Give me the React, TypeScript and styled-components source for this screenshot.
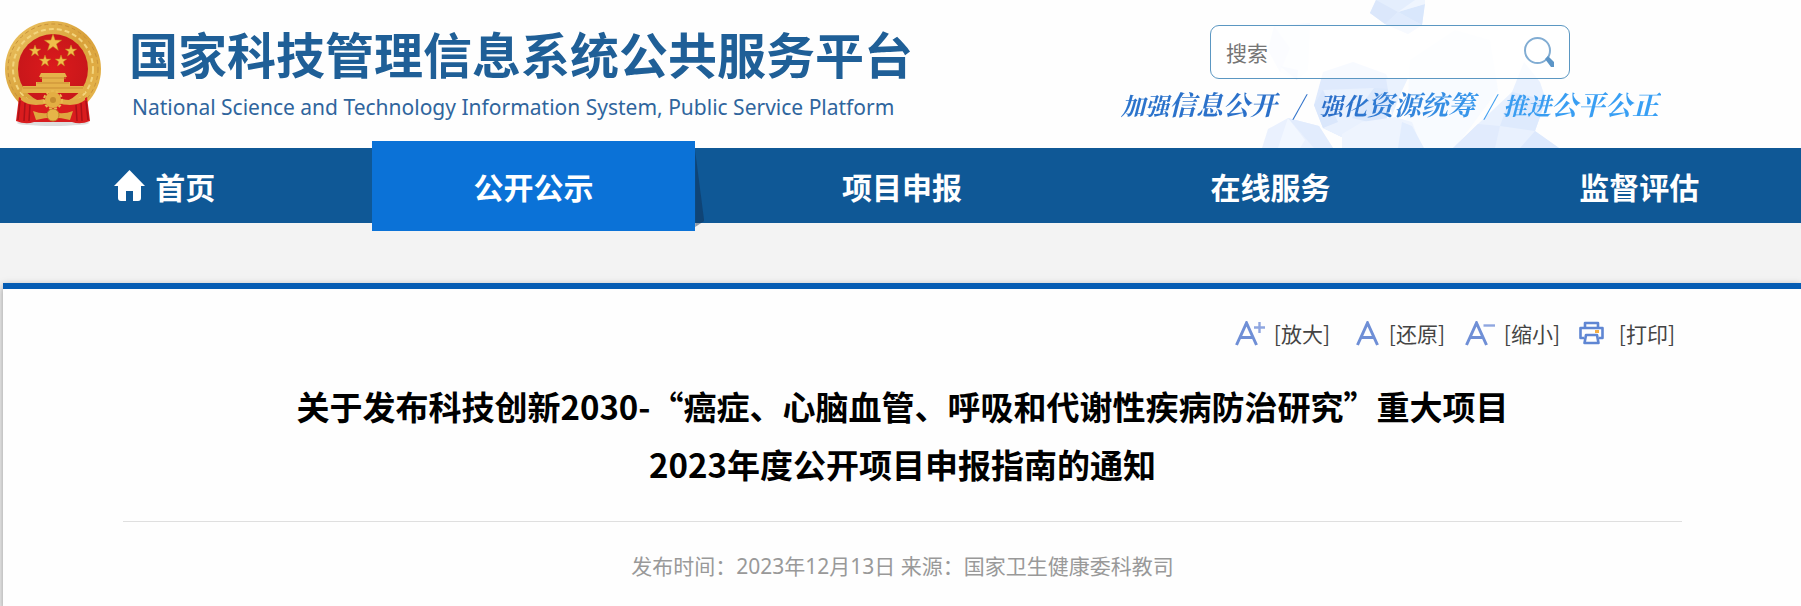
import React from 'react';
import styled, { createGlobalStyle } from 'styled-components';

const sans = '"Noto Sans CJK SC", sans-serif';
const latinFirst = '"Noto Sans", "Noto Sans CJK SC", sans-serif';

const GlobalStyle = createGlobalStyle`
  * { box-sizing: border-box; }
  body { margin: 0; background: #f3f3f3; font-family: ${sans}; }
`;

const Header = styled.header`
  position: relative;
  display: flex;
  justify-content: space-between;
  height: 148px;
  background: #fefefe;
`;

const Crystals = styled.svg`
  position: absolute;
  top: 0;
  right: 231px;
`;

const Brand = styled.div`
  display: flex;
  gap: 27px;
  padding: 17px 0 0 4px;
`;

const Emblem = styled.svg`
  flex: none;
`;

const SiteName = styled.h1`
  margin: 0;
  font: 700 49px/72px ${sans};
  color: #1f5f97;
  white-space: nowrap;
`;

const SiteNameLatin = styled.p`
  margin: 0 0 0 3px;
  font: 400 21px/36px ${latinFirst};
  color: #2f659d;
  white-space: nowrap;
`;

const Aside = styled.div`
  position: relative;
  width: 540px;
  margin-right: 140px;
  padding-top: 25px;
`;

const SearchForm = styled.form`
  display: flex;
  align-items: center;
  width: 360px;
  height: 54px;
  margin-left: 89px;
  padding: 0 15px;
  border: 1px solid #5b97c2;
  border-radius: 9px;
  background: rgba(255, 255, 255, 0.75);
`;

const SearchInput = styled.input`
  flex: 1;
  min-width: 0;
  padding: 0;
  border: 0;
  outline: 0;
  background: transparent;
  font: 400 21px/30px ${sans};
  color: #757575;
  &::placeholder { color: #757575; opacity: 1; }
`;

const SearchButton = styled.button`
  display: flex;
  padding: 0;
  border: 0;
  background: none;
`;

const Slogan = styled.p`
  display: flex;
  margin: 0;
  padding-top: 7px;
  font: italic 700 27px/36px "Noto Serif CJK SC", "Noto Sans CJK SC", serif;
  color: transparent;
  background: linear-gradient(95deg, #2b74cc, #2b6ec8 40%, #3a9cf0 68%, #38a0f5);
  background-clip: text;
  white-space: nowrap;
`;

const SloganLead = styled.span`
  font-size: 24px;
`;

const SloganSlash = styled.span<{ $wide?: boolean }>`
  width: ${(p) => (p.$wide ? 42 : 28)}px;
  font-weight: 400;
  text-align: center;
`;

const Nav = styled.nav`
  position: relative;
  display: grid;
  grid-template-columns: repeat(5, 1fr);
  column-gap: 45px;
  height: 75px;
  padding-left: 3px;
  background: #0f5896;
`;

const NavLink = styled.a<{ $active?: boolean }>`
  position: relative;
  display: flex;
  align-items: center;
  justify-content: center;
  gap: 10px;
  margin: ${(p) => (p.$active ? '-7px 0 -8px' : '0')};
  background: ${(p) => (p.$active ? '#0b72d7' : 'transparent')};
  font: 700 30px/44px ${sans};
  color: #fff;
  text-decoration: none;
  white-space: nowrap;
  &::after {
    content: ${(p) => (p.$active ? '""' : 'none')};
    position: absolute;
    left: 100%;
    top: 10px;
    bottom: 4px;
    width: 9px;
    background: rgba(15, 45, 80, 0.45);
    clip-path: polygon(0 0, 100% 92%, 0 100%);
  }
`;

const Article = styled.main`
  margin: 60px 0 0 3px;
  min-height: 323px;
  padding: 26px 119px 24px 120px;
  border-top: 6px solid #055cb3;
  background: #fefefe;
  box-shadow: 0 3px 8px rgba(0, 0, 0, 0.4);
`;

const Tools = styled.div`
  display: flex;
  justify-content: flex-end;
  padding-right: 7px;
`;

const ToolButton = styled.button`
  display: flex;
  align-items: center;
  justify-content: flex-end;
  gap: 9px;
  width: 115px;
  padding: 0;
  border: 0;
  background: none;
  font: 400 21px/36px ${sans};
  color: #444;
  white-space: nowrap;
`;

const Title = styled.h2`
  margin: 26px 0 0;
  font: 700 33px/58px ${sans};
  color: #000;
  text-align: center;
`;

const Meta = styled.p`
  margin: 28px 0 0;
  padding-top: 26px;
  border-top: 1px solid #dfdfdf;
  font: 400 21px/36px ${latinFirst};
  color: #999;
  text-align: center;
`;

const Star = ({ x, y, r }: { x: number; y: number; r: number }) => {
  const points = Array.from({ length: 10 }, (_, i) => {
    const a = (Math.PI / 5) * i - Math.PI / 2;
    const d = i % 2 ? r * 0.4 : r;
    return `${(x + d * Math.cos(a)).toFixed(1)},${(y + d * Math.sin(a)).toFixed(1)}`;
  }).join(' ');
  return <polygon points={points} fill="#f0bd4a" stroke="#c98a1c" strokeWidth="0.5" />;
};

const NationalEmblem = () => (
  <Emblem width="98" height="112" viewBox="0 0 98 112" role="img" aria-label="国徽">
    <defs>
      <linearGradient id="gold" x1="0" y1="0" x2="1" y2="1">
        <stop offset="0" stopColor="#edc766" />
        <stop offset="0.5" stopColor="#d9a13a" />
        <stop offset="1" stopColor="#e9bb51" />
      </linearGradient>
      <radialGradient id="red" cx="0.5" cy="0.5" r="0.6">
        <stop offset="0" stopColor="#dc1a1c" />
        <stop offset="1" stopColor="#c5161a" />
      </radialGradient>
    </defs>
    <ellipse cx="49" cy="106" rx="36" ry="3" fill="#ddd" />
    <ellipse cx="49" cy="52" rx="48" ry="48" fill="url(#gold)" />
    <ellipse cx="49" cy="52" rx="45" ry="45" fill="none" stroke="#c8923a" strokeWidth="1" strokeDasharray="4 3" />
    <ellipse cx="49" cy="52" rx="40" ry="40" fill="none" stroke="#f3d47c" strokeWidth="2" strokeDasharray="5 3" />
    <ellipse cx="49" cy="52" rx="35" ry="35" fill="url(#red)" />
    <Star x={49} y={26} r={9} />
    <Star x={31} y={34} r={6} />
    <Star x={67} y={34} r={6} />
    <Star x={41} y={44} r={6} />
    <Star x={57} y={44} r={6} />
    <path d="M37 56h24l2 4h-3v5h6v4h13l2 7H17l2-7h13v-4h6v-5h-3z" fill="#e5b24a" />
    <path d="M36 61h26M33 66h32M19 71h60" stroke="#c98d35" strokeWidth="1" />
    <path d="M15 80Q30 90 49 86Q68 90 83 80L86 104Q76 108 68 105H30Q22 108 12 104z" fill="#d91c1e" />
    <path d="M16 84l-2 19M21 86l-1 18M26 88l-1 16M82 84l2 19M77 86l1 18M72 88l1 16" stroke="#ab1218" strokeWidth="1.5" />
    <path d="M17 78Q27 85 40 82L44 86Q27 91 17 83zM81 78Q71 85 58 82L54 86Q71 91 81 83z" fill="#e0ab45" />
    <path d="M29 94Q39 98 49 95Q59 98 69 94L66 103Q49 98 32 103z" fill="#dfa63e" />
    <circle cx="49" cy="83" r="8" fill="#e3ae43" />
    <circle cx="49" cy="83" r="9" fill="none" stroke="#e9ba50" strokeWidth="2" strokeDasharray="3 2" />
    <circle cx="49" cy="83" r="3" fill="#c58c2f" />
    <circle cx="49" cy="98" r="6" fill="#e6b548" stroke="#c28b2d" strokeWidth="1" />
  </Emblem>
);

const CrystalBackdrop = () => (
  <Crystals width="320" height="148" viewBox="0 0 320 148" aria-hidden="true">
    <g>
      <polygon points="126,0 175,0 172,25 158,34 135,24 120,13" fill="#e4eefd" />
      <polygon points="126,0 148,12 135,24 120,13" fill="#dbe7fb" />
      <polygon points="148,12 175,4 172,25" fill="#d9e7fc" />
      <polygon points="148,12 165,0 175,0 175,4" fill="#eff5fe" />
      <polygon points="148,12 135,24 158,34 172,25" fill="#e0ebfd" />
    </g>
    <g>
      <polygon points="24,26 60,23 58,70 47,80 30,72 18,50" fill="#f6f9ff" />
      <polygon points="24,26 40,48 30,72 18,50" fill="#eef4fe" />
      <polygon points="30,66 48,70 47,80" fill="#e6effd" />
    </g>
    <g>
      <polygon points="103,62 136,74 143,89 135,126 102,142 73,128 64,105 73,72" fill="#dfeafd" />
      <polygon points="73,90 124,88 135,126 102,142 73,128" fill="#e9f1fe" />
      <polygon points="73,90 64,105 73,128 88,122" fill="#dae7fc" />
      <polygon points="102,118 124,88 143,89 135,126" fill="#dbe8fc" />
    </g>
    <g>
      <polygon points="12,148 18,129 38,118 69,126 83,148" fill="#eaf1fe" />
      <polygon points="38,118 55,140 50,148 28,148" fill="#f2f7ff" />
      <polygon points="38,118 69,126 83,148 64,148" fill="#e2ecfd" />
    </g>
    <g>
      <polygon points="160,60 205,30 240,40 248,90 205,148 155,148" fill="#f8fbff" />
      <polygon points="92,148 92,134 112,122 145,117 162,122 172,148" fill="#eef4fe" />
      <polygon points="136,78 158,78 150,95 142,116" fill="#eaf2fe" />
      <polygon points="152,122 162,126 174,148 148,148" fill="#e2edfe" />
      <polygon points="274,62 290,82 296,100 285,131 309,148 203,148 228,124 262,92" fill="#e9f1fe" />
      <polygon points="262,92 296,100 285,131 250,126" fill="#deeafd" />
      <polygon points="228,124 250,126 245,148 203,148" fill="#e1ebfd" />
      <polygon points="285,131 309,148 270,148" fill="#dde9fd" />
    </g>
  </Crystals>
);

const SearchIcon = () => (
  <svg width="30" height="30" viewBox="0 0 30 30" fill="none" aria-hidden="true">
    <circle cx="13.5" cy="13.5" r="12.5" stroke="#82add3" strokeWidth="2" />
    <path d="M21 22l3-3 6 6v5h-3z" fill="#5c95c7" />
  </svg>
);

const HomeIcon = () => (
  <svg width="31" height="31" viewBox="0 0 31 31" aria-hidden="true">
    <path d="M15.5 0L31 16H27V28Q27 31 24 31H19V21H12V31H7Q4 31 4 28V16H0Z" fill="#fff" />
  </svg>
);

const LetterIcon = ({ sign }: { sign?: 'plus' | 'minus' }) => (
  <svg width={sign ? 30 : 24} height="25" viewBox={`0 0 ${sign ? 30 : 24} 25`} fill="none" aria-hidden="true">
    <path d="M1.5 24L11.5 2L21.5 24M5 16.5H18" stroke="#6f8fd6" strokeWidth="3" />
    {sign && <path d={sign === 'plus' ? 'M19 6.5H30M24.5 1V12' : 'M18.5 4.5H30'} stroke="#8fa6e0" strokeWidth="2.4" />}
  </svg>
);

const PrintIcon = () => (
  <svg width="31" height="24" viewBox="0 0 31 24" fill="none" aria-hidden="true">
    <g stroke="#5f86d3" strokeWidth="2.6" strokeLinejoin="round">
      <path d="M6 7V2H19V7" />
      <path d="M5 17H1.5V7H23.5V17H20" />
      <path d="M7 14H18L19.5 22H5.5Z" />
    </g>
    <rect x="16" y="9" width="4" height="3" fill="#f5ae45" />
  </svg>
);

const sloganParts = [
  ['加强', '信息公开'],
  ['强化', '资源统筹'],
  ['推进', '公平公正'],
];

const sections = ['公开公示', '项目申报', '在线服务', '监督评估'];

export default function App() {
  return (
    <>
      <GlobalStyle />
      <Header>
        <CrystalBackdrop />
        <Brand>
          <NationalEmblem />
          <div>
            <SiteName>国家科技管理信息系统公共服务平台</SiteName>
            <SiteNameLatin>National Science and Technology Information System, Public Service Platform</SiteNameLatin>
          </div>
        </Brand>
        <Aside>
          <SearchForm>
            <SearchInput type="text" placeholder="搜索" aria-label="搜索" />
            <SearchButton type="button" aria-label="搜索">
              <SearchIcon />
            </SearchButton>
          </SearchForm>
          <Slogan>
            {sloganParts.map(([lead, rest], i) => (
              <React.Fragment key={lead}>
                {i > 0 && <SloganSlash $wide={i === 1}>/</SloganSlash>}
                <span>
                  <SloganLead>{lead}</SloganLead>
                  {rest}
                </span>
              </React.Fragment>
            ))}
          </Slogan>
        </Aside>
      </Header>
      <Nav>
        <NavLink href="#">
          <HomeIcon />
          首页
        </NavLink>
        {sections.map((name, i) => (
          <NavLink key={name} href="#" $active={i === 0}>
            {name}
          </NavLink>
        ))}
      </Nav>
      <Article>
        <Tools>
          <ToolButton type="button">
            <LetterIcon sign="plus" />
            [放大]
          </ToolButton>
          <ToolButton type="button">
            <LetterIcon />
            [还原]
          </ToolButton>
          <ToolButton type="button">
            <LetterIcon sign="minus" />
            [缩小]
          </ToolButton>
          <ToolButton type="button">
            <PrintIcon />
            [打印]
          </ToolButton>
        </Tools>
        <Title>
          关于发布科技创新2030-“癌症、心脑血管、呼吸和代谢性疾病防治研究”重大项目
          <br />
          2023年度公开项目申报指南的通知
        </Title>
        <Meta>发布时间：2023年12月13日 来源：国家卫生健康委科教司</Meta>
      </Article>
    </>
  );
}
